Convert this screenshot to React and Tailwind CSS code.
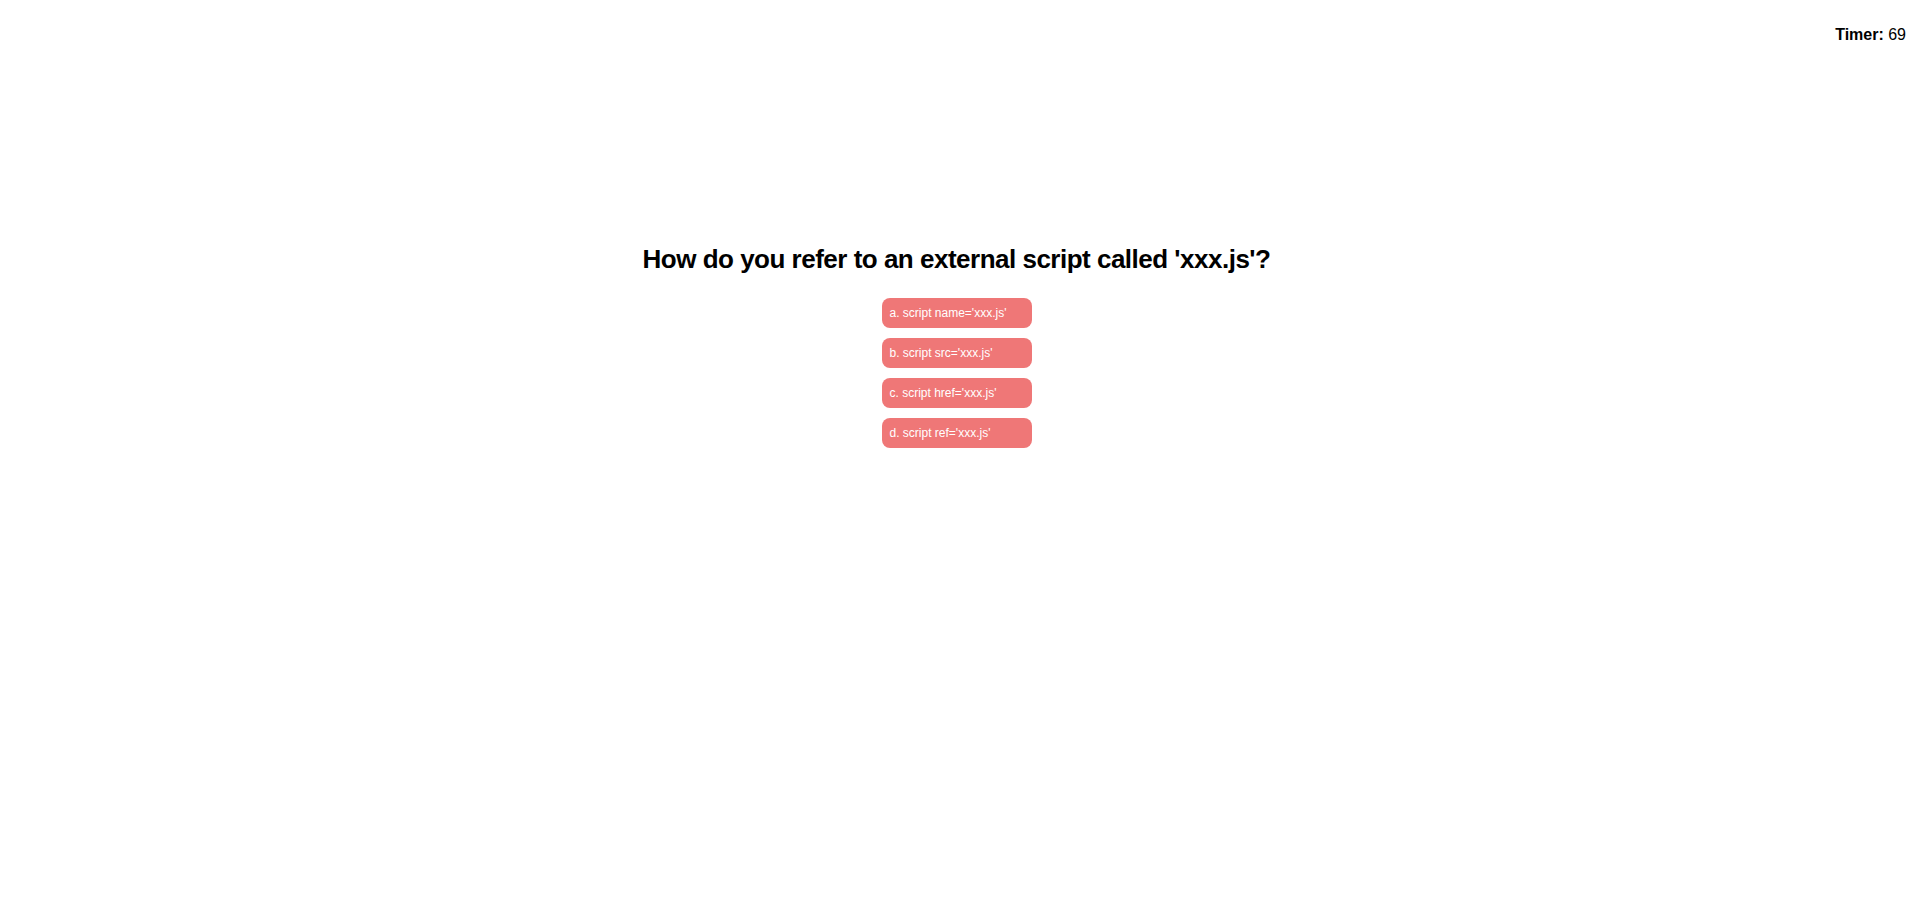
const answers = [
  "a. script name='xxx.js'",
  "b. script src='xxx.js'",
  "c. script href='xxx.js'",
  "d. script ref='xxx.js'",
]

export default function App() {
  return (
    <div className="min-h-[911px] bg-white text-black font-['Liberation_Sans',Arial,sans-serif]">
      <header className="flex justify-end pt-[26px] pr-[7px] text-[16px] leading-[18px]">
        <p><span className="font-bold">Timer:</span> 69</p>
      </header>
      <main className="flex flex-col items-center pt-[200px]">
        <h2 className="text-[26px] leading-[30px] font-bold tracking-[-0.5px]">How do you refer to an external script called 'xxx.js'?</h2>
        <div className="mt-[24px] flex flex-col gap-[10px]">
          {answers.map(a => (
            <button key={a} className="w-[150px] h-[30px] px-[8px] text-left text-[12px] text-white bg-[#ef7777] rounded-[8px]">
              {a}
            </button>
          ))}
        </div>
      </main>
    </div>
  )
}
